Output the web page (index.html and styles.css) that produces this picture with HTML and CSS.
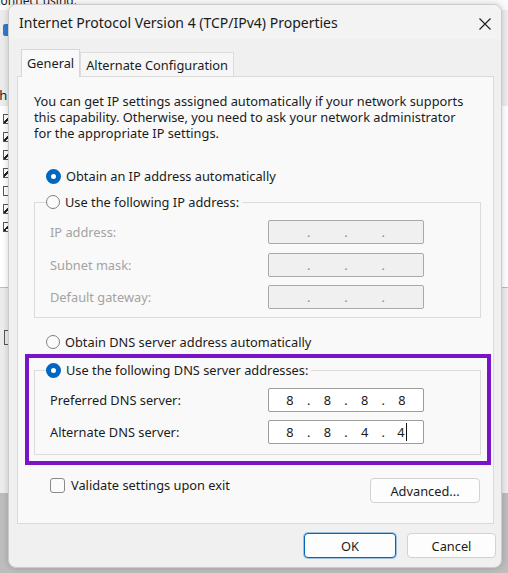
FILE: index.html
```html
<!DOCTYPE html>
<html lang="en">
<head>
<meta charset="utf-8">
<title>Internet Protocol Version 4 (TCP/IPv4) Properties</title>
<link rel="stylesheet" href="styles.css">
</head>
<body>
<div class="backwin">
  <div class="bw-caption">Connect using:</div>
  <div class="bw-icon"></div>
  <div class="bw-h">Th</div>
  <div class="bw-list">
    <span class="bw-cb on"></span>
    <span class="bw-cb on"></span>
    <span class="bw-cb on"></span>
    <span class="bw-cb on"></span>
    <span class="bw-cb"></span>
    <span class="bw-cb on"></span>
    <span class="bw-cb on"></span>
  </div>
  <div class="bw-btn"></div>
</div>

<div class="dialog">
  <div class="titlebar">
    <span class="title">Internet Protocol Version 4 (TCP/IPv4) Properties</span>
    <svg class="close" width="12" height="12" viewBox="0 0 12 12" aria-hidden="true"><path d="M0.5 0.5 L11.5 11.5 M11.5 0.5 L0.5 11.5" stroke="#1b1b1b" stroke-width="1.1" fill="none"/></svg>
  </div>
  <div class="tabs">
    <div class="tab active">General</div>
    <div class="tab">Alternate Configuration</div>
  </div>
  <div class="panel">
    <p class="intro"><span class="line">You can get IP settings assigned automatically if your network supports</span><span class="line">this capability. Otherwise, you need to ask your network administrator</span><span class="line">for the appropriate IP settings.</span></p>

    <div class="opt first"><span class="radio checked"></span><span>Obtain an IP address automatically</span></div>

    <fieldset class="group">
      <legend class="opt"><span class="radio"></span><span>Use the following IP address:</span></legend>
      <div class="rows">
        <span class="lbl disabled">IP address:</span>
        <div class="ipfield off"><span class="seg"></span><span class="dot">.</span><span class="seg"></span><span class="dot">.</span><span class="seg"></span><span class="dot">.</span><span class="seg"></span></div>
        <span class="lbl disabled">Subnet mask:</span>
        <div class="ipfield off"><span class="seg"></span><span class="dot">.</span><span class="seg"></span><span class="dot">.</span><span class="seg"></span><span class="dot">.</span><span class="seg"></span></div>
        <span class="lbl disabled">Default gateway:</span>
        <div class="ipfield off"><span class="seg"></span><span class="dot">.</span><span class="seg"></span><span class="dot">.</span><span class="seg"></span><span class="dot">.</span><span class="seg"></span></div>
      </div>
    </fieldset>

    <div class="opt dnsauto"><span class="radio"></span><span>Obtain DNS server address automatically</span></div>

    <div class="highlight">
      <fieldset class="group dns">
        <legend class="opt"><span class="radio checked"></span><span>Use the following DNS server addresses:</span></legend>
        <div class="rows">
          <span class="lbl">Preferred DNS server:</span>
          <div class="ipfield"><span class="seg">8</span><span class="dot">.</span><span class="seg">8</span><span class="dot">.</span><span class="seg">8</span><span class="dot">.</span><span class="seg">8</span></div>
          <span class="lbl">Alternate DNS server:</span>
          <div class="ipfield"><span class="seg">8</span><span class="dot">.</span><span class="seg">8</span><span class="dot">.</span><span class="seg">4</span><span class="dot">.</span><span class="seg">4<span class="caret"></span></span></div>
        </div>
      </fieldset>
    </div>

    <div class="bottomrow">
      <label class="check"><span class="box"></span><span>Validate settings upon exit</span></label>
      <button class="btn advanced" type="button">Advanced...</button>
    </div>
  </div>
  <div class="footer">
    <button class="btn ok" type="button">OK</button>
    <button class="btn cancel" type="button">Cancel</button>
  </div>
</div>
</body>
</html>
```

FILE: styles.css
```css
* { box-sizing: border-box; }

html, body {
  margin: 0;
  padding: 0;
}

body {
  width: 508px;
  height: 573px;
  overflow: hidden;
  position: relative;
  background: #bdbdbd;
  font-family: "Noto Sans", "Open Sans", sans-serif;
  font-size: 12.8px;
  color: #1b1b1b;
}

/* window behind the dialog */
.backwin {
  position: absolute;
  left: 0;
  top: 0;
  width: 508px;
  height: 493px;
  background: #ececec;
  display: flex;
  flex-direction: column;
  overflow: hidden;
}

.bw-caption {
  margin: -6px 0 0 -7px;
  font-size: 12px;
  line-height: 14px;
  white-space: nowrap;
  background: #fafafa;
  padding-bottom: 2px;
}

.bw-icon {
  margin: 14px 0 0 3px;
  width: 9px;
  height: 12px;
  background: #2f7bcc;
  border-radius: 2px;
}

.bw-h {
  margin: 52px 0 0 -8px;
  font-size: 13px;
  line-height: 14px;
  white-space: nowrap;
}

.bw-list {
  margin-top: 4px;
  height: 182px;
  background: #ffffff;
  border-bottom: 1px solid #bcbcbc;
  display: flex;
  flex-direction: column;
  gap: 8px;
  padding: 8px 0 0 3px;
}

.bw-cb {
  width: 9px;
  height: 10px;
  border: 1px solid #555;
  background: #fff;
}

.bw-cb.on {
  background: linear-gradient(135deg, transparent 40%, #222 40%, #222 60%, transparent 60%) #fff;
}

.bw-btn {
  margin: 42px 0 0 4px;
  width: 8px;
  height: 15px;
  border: 1px solid #555;
  border-right: none;
}

/* dialog */
.dialog {
  position: absolute;
  left: 8px;
  top: 4px;
  width: 494px;
  height: 564px;
  background: #f0f0f0;
  border: 1px solid #cbcbcb;
  border-radius: 8px;
  box-shadow: 0 0 6px rgba(0, 0, 0, 0.18);
  display: flex;
  flex-direction: column;
  overflow: hidden;
}

.titlebar {
  height: 34px;
  flex: none;
  display: flex;
  align-items: center;
  justify-content: space-between;
  padding: 0 10px 0 10px;
  background: #f3f3f3;
}

.title {
  font-size: 14px;
  color: #1a1a1a;
}

.close {
  margin-top: 3px;
}

.tabs {
  flex: none;
  display: flex;
  align-items: flex-end;
  height: 37px;
  padding-left: 12px;
  position: relative;
  z-index: 1;
}

.tab {
  height: 24px;
  padding: 3px 5px 0 5px;
  border: 1px solid #dcdcdc;
  border-bottom: none;
  background: #f6f6f6;
  font-size: 12.8px;
  line-height: 18px;
  color: #1b1b1b;
}

.tab.active {
  height: 28px;
  margin-bottom: -1px;
  padding-top: 4px;
  background: #f9f9f9;
  border-color: #d6d6d6;
}

.panel {
  flex: none;
  margin: 0 7px 0 8px;
  height: 448px;
  background: #f9f9f9;
  border: 1px solid #dadada;
  padding: 16px 0 0 16px;
  display: flex;
  flex-direction: column;
  align-items: flex-start;
}

.intro {
  margin: 0;
  font-size: 12.8px;
  line-height: 16px;
  color: #1b1b1b;
  white-space: nowrap;
  display: flex;
  flex-direction: column;
}

.intro .line {
  display: block;
  height: 16px;
}

.opt {
  display: flex;
  align-items: center;
  gap: 5px;
  height: 16px;
  font-size: 12.8px;
  white-space: nowrap;
}

.opt.first {
  margin: 27px 0 0 12px;
}

.opt.dnsauto {
  margin: 16px 0 0 12px;
}

.radio {
  width: 14px;
  height: 14px;
  border-radius: 50%;
  border: 1px solid #808080;
  background: #fbfbfb;
  flex: none;
}

.radio.checked {
  width: 15px;
  height: 15px;
  border: 5px solid #0067c0;
  background: #ffffff;
}

.group {
  margin: 10px 0 0 0;
  width: 447px;
  border: 1px solid #dcdcdc;
  padding: 0 11px 8px 11px;
  min-width: 0;
}

.group legend {
  padding: 0 3px 0 0;
  background: #f9f9f9;
}

.rows {
  display: grid;
  grid-template-columns: 218px 156px;
  row-gap: 8.5px;
  margin-top: 10px;
  padding-left: 4px;
  align-items: center;
}

.lbl {
  font-size: 12.8px;
  white-space: nowrap;
}

.lbl.disabled {
  color: #a3a3a3;
}

.ipfield {
  height: 24px;
  border: 1px solid #9c9c9c;
  border-radius: 2px;
  background: #ffffff;
  display: flex;
  align-items: center;
  padding-left: 7px;
  font-size: 12.8px;
  color: #1b1b1b;
}

.ipfield.off {
  background: #f0f0f0;
  border-color: #a9a9a9;
  color: #8e8e8e;
}

.seg {
  width: 28px;
  text-align: center;
  position: relative;
}

.dot {
  width: 9.3px;
  text-align: center;
}

.caret {
  display: inline-block;
  width: 1px;
  height: 18px;
  background: #111;
  vertical-align: middle;
  margin-left: 1px;
  margin-top: -2px;
}

.highlight {
  margin: 4px 0 0 -9px;
  width: 466px;
  border: 4px solid #7a15c7;
  padding: 4px 6px 6px 5px;
}

.highlight .group {
  margin: 0;
}

.group.dns {
  padding-bottom: 10px;
}

.group.dns .rows {
  row-gap: 8px;
}

.bottomrow {
  margin: 12px 0 0 16px;
  width: 430px;
  display: flex;
  justify-content: space-between;
  align-items: flex-start;
}

.check {
  display: flex;
  align-items: center;
  gap: 6px;
  height: 16px;
  font-size: 12.8px;
  white-space: nowrap;
}

.box {
  width: 15px;
  height: 15px;
  border: 1px solid #8a8a8a;
  border-radius: 3px;
  background: #fbfbfb;
}

.btn {
  font-family: inherit;
  font-size: 12.8px;
  color: #1b1b1b;
  background: #fdfdfd;
  border: 1px solid #d2d2d2;
  border-radius: 4px;
  height: 25px;
  padding: 0;
}

.advanced {
  width: 110px;
  margin-top: 1px;
}

.footer {
  flex: 1;
  display: flex;
  justify-content: flex-end;
  align-items: flex-start;
  gap: 11px;
  padding: 9px 5px 0 0;
}

.ok {
  width: 92px;
  border: 1px solid #0067c0;
  box-shadow: 0 0 0 1px rgba(0, 103, 192, 0.35);
}

.cancel {
  width: 89px;
}
```
